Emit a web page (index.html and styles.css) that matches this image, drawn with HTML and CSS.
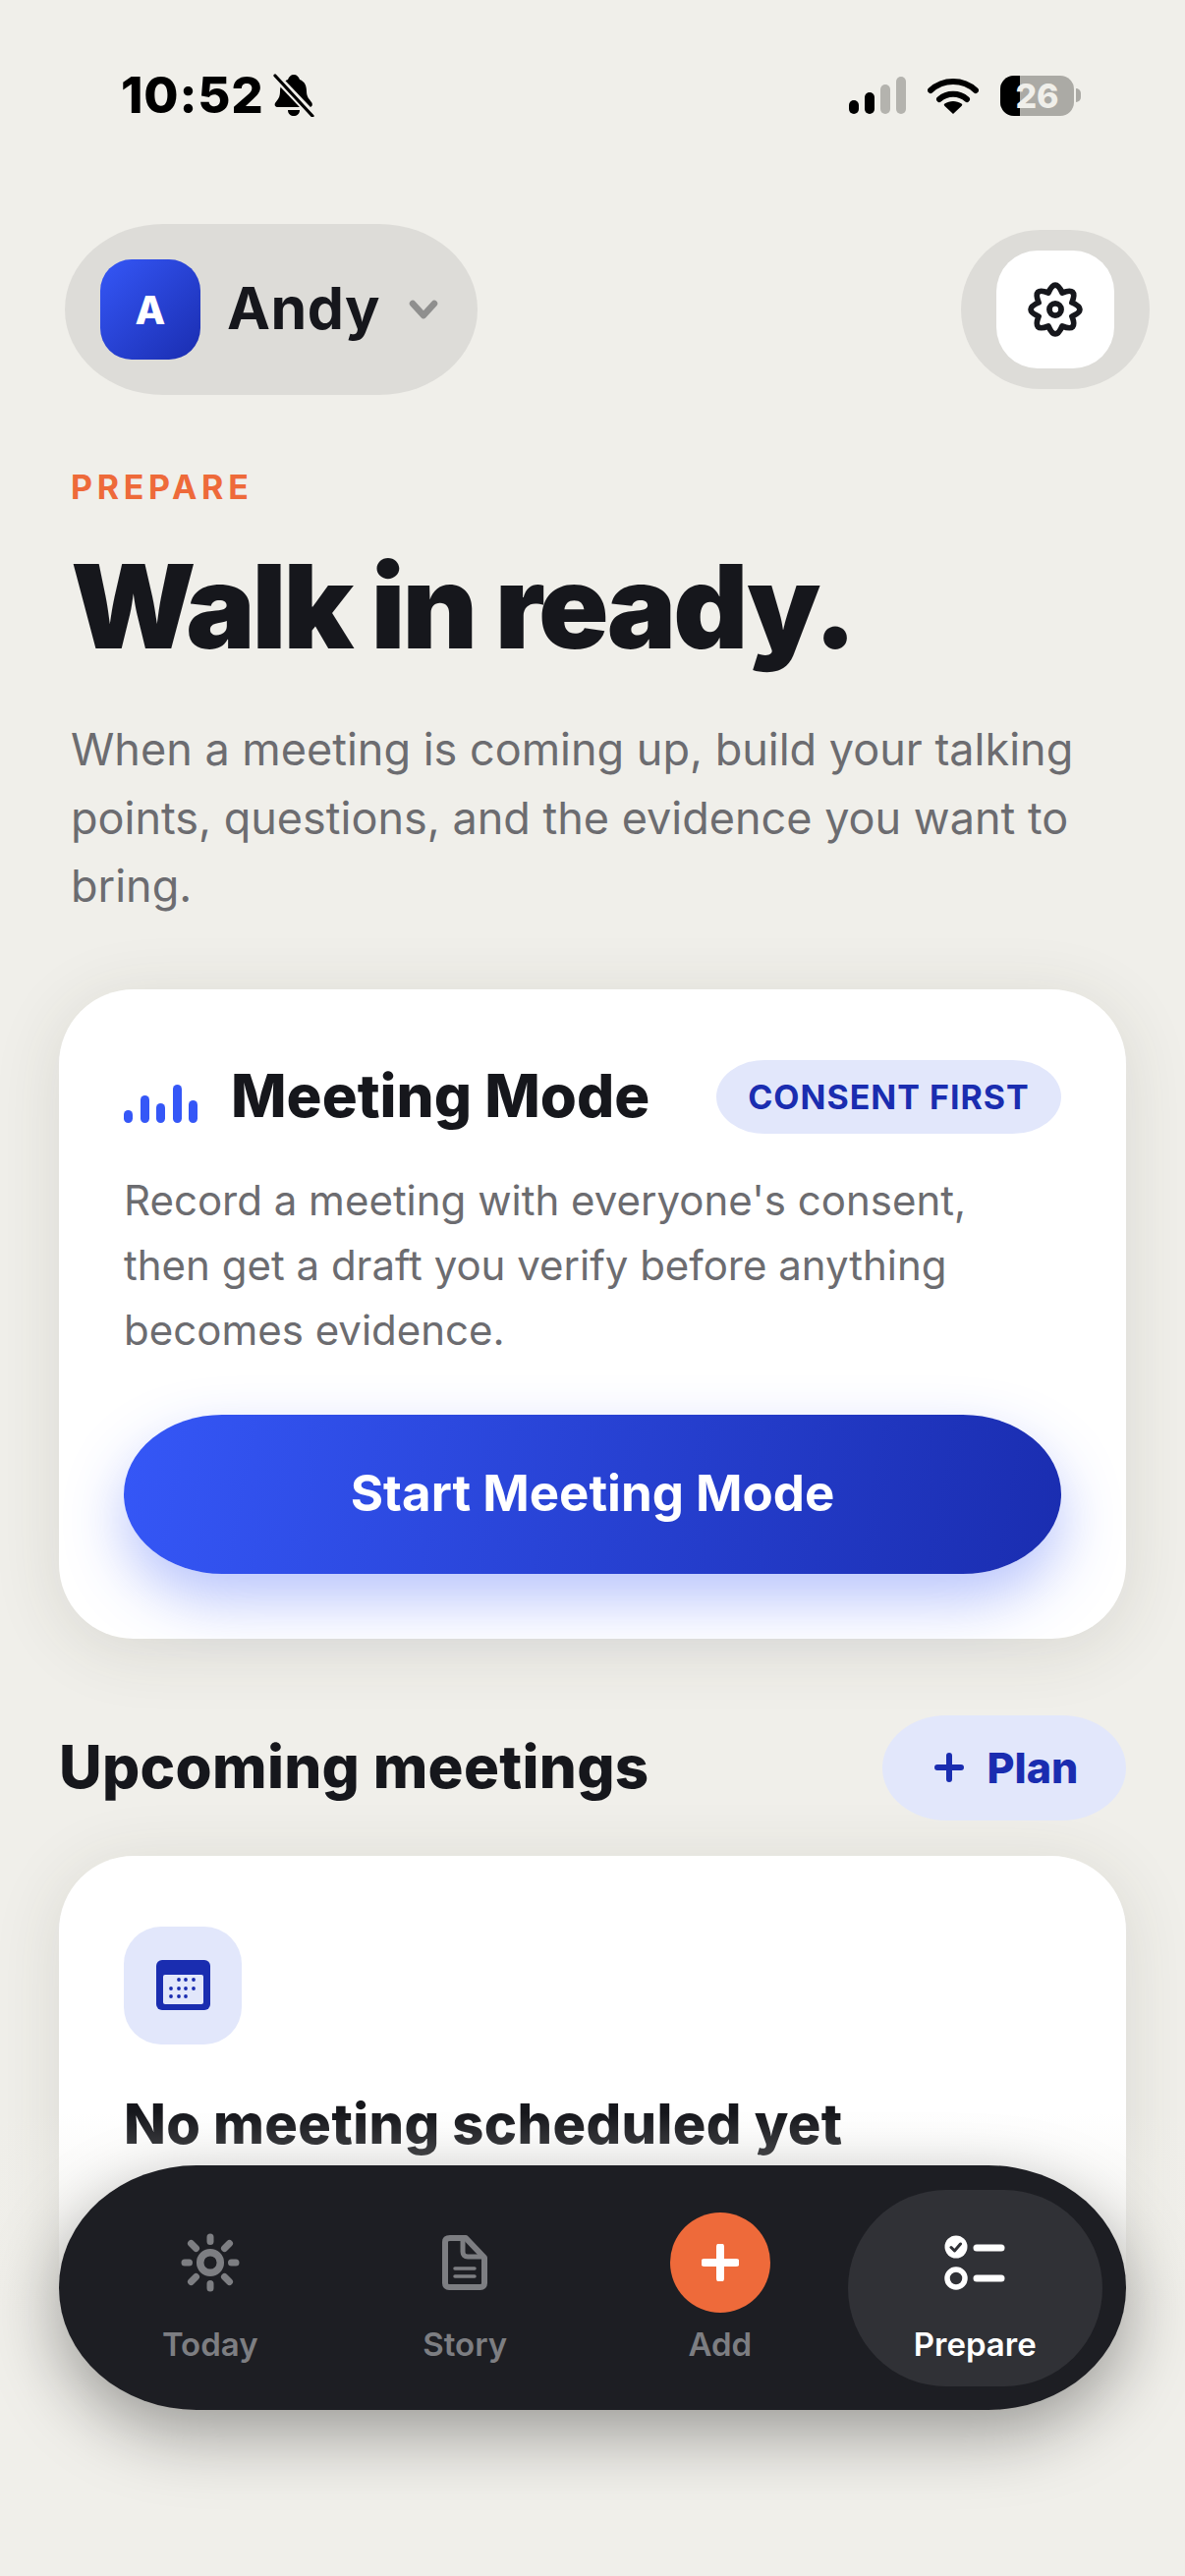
FILE: index.html
```html
<!DOCTYPE html>
<html lang="en">
<head>
    <meta charset="utf-8">
    <title>Prepare</title>
    <link rel="stylesheet" href="styles.css">
</head>
<body>
    <div class="phone">
        <!-- Status bar -->
        <div class="status-bar">
            <div class="status-left">
                <span class="clock">10:52</span>
                <svg class="bell" width="42" height="44" viewBox="0 0 42 44">
                    <path d="M21 1c3 0 5 2 6 5 5 2 7 6 7 12 0 6 3 8 5 11 2 3 0 5-2 5H5c-3 0-4-2-3-4 3-4 5-6 5-12 0-6 3-10 8-12 1-3 3-5 6-5zM15 37h12c0 4-3 6-6 6s-6-2-6-6z" fill="#000"/>
                    <path d="M1 1l40 42" stroke="#f0efea" stroke-width="8"/>
                    <path d="M2 2l38 41" stroke="#000" stroke-width="3.2" stroke-linecap="round"/>
                </svg>
            </div>
            <div class="status-right">
                <svg width="58" height="38" viewBox="0 0 58 38">
                    <rect x="0" y="24" width="10" height="14" rx="5" fill="#000"/>
                    <rect x="16" y="16" width="10" height="22" rx="5" fill="#000"/>
                    <rect x="32" y="8" width="10" height="30" rx="5" fill="#b4b3ae"/>
                    <rect x="48" y="0" width="10" height="38" rx="5" fill="#b4b3ae"/>
                </svg>
                <svg class="wifi" width="52" height="38" viewBox="0 0 52 38">
                    <path d="M3 14C16 2 36 2 49 14M12 23c8-7 20-7 28 0" fill="none" stroke="#000" stroke-width="6" stroke-linecap="round"/>
                    <path d="M26 38l-8.500-8c-1-1-1-2 0-2.500 5-3.500 12-3.500 17 0 1 .5 1 1.500 0 2.500z" fill="#000"/>
                </svg>
                <div class="battery">
                    <div class="battery-body">
                        <div class="battery-fill"></div>
                        <span class="battery-num">26</span>
                    </div>
                    <div class="battery-nub"></div>
                </div>
            </div>
        </div>

        <!-- Account row -->
        <div class="top-row">
            <div class="account">
                <div class="avatar">A</div>
                <span class="account-name">Andy</span>
                <svg class="chevron" width="30" height="20" viewBox="0 0 30 20">
                    <path d="M4 4l11 12L26 4" fill="none" stroke="#8f8f8e" stroke-width="6.500" stroke-linecap="round" stroke-linejoin="round"/>
                </svg>
            </div>
            <div class="settings-ring">
                <div class="settings-btn">
                    <svg width="58" height="58" viewBox="0 0 24 24" fill="none" stroke="#16171c" stroke-width="2.400" stroke-linejoin="round">
                        <circle cx="12" cy="12" r="2.500"/>
                        <path d="M9.090 4.980Q12 -1.600 14.910 4.980Q21.620 2.380 19.020 9.090Q25.600 12 19.020 14.910Q21.620 21.620 14.910 19.020Q12 25.600 9.090 19.020Q2.380 21.620 4.980 14.910Q-1.600 12 4.980 9.090Q2.380 2.380 9.090 4.980Z"/>
                    </svg>
                </div>
            </div>
        </div>

        <!-- Intro -->
        <div class="intro">
            <div class="eyebrow">PREPARE</div>
            <h1>Walk in ready.</h1>
            <p>When a meeting is coming up, build your talking points, questions, and the evidence you want to bring.</p>
        </div>

        <!-- Meeting mode card -->
        <div class="card meeting-card">
            <div class="meeting-head">
                <div class="bars">
                    <span class="bar bar-1"></span>
                    <span class="bar bar-2"></span>
                    <span class="bar bar-3"></span>
                    <span class="bar bar-4"></span>
                    <span class="bar bar-5"></span>
                </div>
                <h2>Meeting Mode</h2>
                <span class="badge">CONSENT FIRST</span>
            </div>
            <p class="meeting-text">Record a meeting with everyone's consent, then get a draft you verify before anything becomes evidence.</p>
            <div class="start-btn">Start Meeting Mode</div>
        </div>

        <!-- Upcoming -->
        <div class="section-head">
            <h3>Upcoming meetings</h3>
            <div class="plan-btn">
                <svg width="30" height="30" viewBox="0 0 30 30">
                    <path d="M15 3v24M3 15h24" stroke="#1a2db0" stroke-width="6" stroke-linecap="round"/>
                </svg>
                <span>Plan</span>
            </div>
        </div>

        <div class="card empty-card">
            <div class="tile">
                <svg width="55" height="51" viewBox="0 0 55 51">
                    <rect width="55" height="51" rx="6" fill="#1a2db0"/>
                    <rect x="7" y="15" width="41" height="30" rx="2" fill="#e2e7fb"/>
                    <g fill="#1a2db0">
                        <circle cx="23" cy="20" r="1.900"/><circle cx="30" cy="20" r="1.900"/><circle cx="38" cy="20" r="1.900"/>
                        <circle cx="15" cy="29" r="1.900"/><circle cx="23" cy="29" r="1.900"/><circle cx="30" cy="29" r="1.900"/><circle cx="38" cy="29" r="1.900"/>
                        <circle cx="15" cy="37" r="1.900"/><circle cx="23" cy="37" r="1.900"/><circle cx="30" cy="37" r="1.900"/>
                    </g>
                </svg>
            </div>
            <h4>No meeting scheduled yet</h4>
        </div>

        <div class="fade"></div>

        <!-- Tab bar -->
        <nav class="tabbar">
            <div class="tab">
                <div class="tab-icon">
                    <svg width="62" height="62" viewBox="0 0 62 62" fill="none" stroke="#7d7e82" stroke-linecap="round">
                        <circle cx="31" cy="31" r="10.300" stroke-width="7.500"/>
                        <path d="M31 5v4.500M31 52.500v4.500M5 31h4.500M52.500 31h4.500M11.500 11.500l5 5M45.500 45.500l5 5M50.500 11.500l-5 5M16.500 45.500l-5 5" stroke-width="7"/>
                    </svg>
                </div>
                <span>Today</span>
            </div>
            <div class="tab">
                <div class="tab-icon">
                    <svg width="46" height="56" viewBox="0 0 46 56" fill="none" stroke="#7d7e82" stroke-linejoin="round">
                        <path d="M8 3h16l19 20v26c0 2.500-1.500 4-4 4H7c-2.500 0-4-1.500-4-4V7c0-2.500 1.500-4 5-4z" stroke-width="6"/>
                        <path d="M21 3v14c0 3 2 5 5 5h17" fill="none" stroke-width="5"/>
                        <path d="M13 34h20M13 42h20" stroke-width="3.500" stroke-linecap="round"/>
                    </svg>
                </div>
                <span>Story</span>
            </div>
            <div class="tab">
                <div class="tab-icon">
                    <div class="add-circle">
                        <svg width="38" height="38" viewBox="0 0 38 38">
                            <path d="M19 3v32M3 19h32" stroke="#fff" stroke-width="8" stroke-linecap="round"/>
                        </svg>
                    </div>
                </div>
                <span>Add</span>
            </div>
            <div class="tab tab-active">
                <div class="tab-icon">
                    <svg width="62" height="56" viewBox="0 0 62 56" fill="none">
                        <circle cx="12" cy="12" r="11.500" fill="#fff"/>
                        <path d="M7 12.500l3.500 3.500 6-7" stroke="#303136" stroke-width="3" stroke-linecap="round" stroke-linejoin="round"/>
                        <circle cx="12" cy="44" r="9" stroke="#fff" stroke-width="5.500"/>
                        <path d="M33 13h25M33 44h25" stroke="#fff" stroke-width="7" stroke-linecap="round"/>
                    </svg>
                </div>
                <span>Prepare</span>
            </div>
        </nav>
    </div>
</body>
</html>
```

FILE: styles.css
```css
/* Page */
body {
    margin: 0;
    background-color: #f0efea;
    font-family: "Inter", "Liberation Sans", sans-serif;
    color: #16171c;
}

.phone {
    position: relative;
    height: 2622px;
    overflow: hidden;
    padding: 0 60px;
    box-sizing: border-box;
}

h1, h2, h3, h4, p {
    margin: 0;
}

/* Status bar */
.status-bar {
    display: flex;
    justify-content: space-between;
    align-items: center;
    height: 44px;
    padding: 75px 46px 0 63px;
    box-sizing: content-box;
}

.status-left {
    display: flex;
    align-items: center;
    gap: 9px;
}

.clock {
    font-size: 51px;
    font-weight: 800;
    letter-spacing: 0.8px;
    line-height: 44px;
    color: #000;
}

.status-right {
    display: flex;
    align-items: center;
    gap: 22px;
}

.battery {
    display: flex;
    align-items: center;
    gap: 2px;
}

.battery-body {
    position: relative;
    width: 75px;
    height: 41px;
    border-radius: 14px;
    background-color: #abaaa5;
    overflow: hidden;
    display: flex;
    justify-content: center;
    align-items: center;
}

.battery-fill {
    position: absolute;
    left: 0;
    top: 0;
    bottom: 0;
    width: 20px;
    background-color: #000;
}

.battery-num {
    position: relative;
    font-size: 34px;
    font-weight: 800;
    color: #f0efea;
}

.battery-nub {
    width: 5px;
    height: 14px;
    border-radius: 0 7px 7px 0;
    background-color: #abaaa5;
}

/* Account row */
.top-row {
    display: flex;
    justify-content: space-between;
    align-items: center;
    margin: 109px -24px 0 6px;
}

.account {
    display: flex;
    align-items: center;
    width: 420px;
    height: 174px;
    box-sizing: border-box;
    padding-left: 36px;
    border-radius: 100px / 87px;
    background-color: #dddcd8;
}

.avatar {
    display: flex;
    justify-content: center;
    align-items: center;
    width: 102px;
    height: 102px;
    border-radius: 32px;
    background: linear-gradient(135deg, #3557f7, #1a2db0);
    color: #fff;
    font-size: 40px;
    font-weight: 800;
}

.account-name {
    margin-left: 27px;
    margin-bottom: 3px;
    font-size: 59px;
    font-weight: 700;
    letter-spacing: 0.5px;
}

.chevron {
    margin-left: 29px;
}

.settings-ring {
    display: flex;
    justify-content: center;
    align-items: center;
    width: 192px;
    height: 162px;
    border-radius: 81px;
    background-color: #dddcd8;
}

.settings-btn {
    display: flex;
    justify-content: center;
    align-items: center;
    width: 120px;
    height: 120px;
    border-radius: 42px;
    background-color: #fff;
}

/* Intro */
.intro {
    padding: 0 0 0 12px;
}

.eyebrow {
    margin-top: 74px;
    font-size: 34px;
    line-height: 40px;
    font-weight: 700;
    letter-spacing: 4.700px;
    color: #ee6a3a;
}

h1 {
    margin-top: 33px;
    font-size: 118px;
    line-height: 136px;
    font-weight: 900;
    letter-spacing: -3px;
    white-space: nowrap;
}

.intro p {
    margin-top: 43px;
    font-size: 45px;
    line-height: 69.500px;
    color: #6c6c70;
}

/* Cards */
.card {
    background-color: #fff;
    border-radius: 76px;
    box-sizing: border-box;
    padding: 0 66px;
    box-shadow: 0 10px 70px rgba(60, 60, 40, 0.12);
}

.meeting-card {
    height: 661px;
    margin-top: 70px;
    padding-top: 72px;
}

.meeting-head {
    display: flex;
    align-items: center;
    height: 75px;
}

.bars {
    display: flex;
    align-items: flex-end;
    gap: 7.500px;
    height: 39px;
    margin-top: 14px;
    margin-right: 34px;
}

.bar {
    width: 9px;
    border-radius: 5px;
    background-color: #3557f7;
}

.bar-1 { height: 13px; }
.bar-2 { height: 28px; }
.bar-3 { height: 20px; }
.bar-4 { height: 39px; }
.bar-5 { height: 23px; }

h2 {
    margin-bottom: 3px;
    font-size: 60px;
    font-weight: 800;
    letter-spacing: 0;
    white-space: nowrap;
}

.badge {
    margin-left: auto;
    width: 351px;
    height: 75px;
    border-radius: 50px / 38px;
    background-color: #e2e7fb;
    color: #1a2db0;
    font-size: 34px;
    font-weight: 700;
    letter-spacing: 1px;
    line-height: 75px;
    text-align: center;
    white-space: nowrap;
}

.meeting-text {
    margin-top: 35px;
    font-size: 42px;
    line-height: 66px;
    color: #6c6c70;
}

.start-btn {
    margin-top: 53px;
    height: 162px;
    border-radius: 100px / 81px;
    background: linear-gradient(100deg, #3557f7, #1a2db0);
    box-shadow: 0 26px 60px rgba(53, 87, 247, 0.35);
    color: #fff;
    font-size: 51px;
    font-weight: 700;
    line-height: 160px;
    text-align: center;
}

/* Upcoming */
.section-head {
    display: flex;
    justify-content: space-between;
    align-items: center;
    margin-top: 78px;
}

h3 {
    margin-bottom: 3px;
    font-size: 60px;
    font-weight: 800;
    letter-spacing: 0.300px;
}

.plan-btn {
    display: flex;
    justify-content: center;
    align-items: center;
    gap: 24px;
    width: 248px;
    height: 107px;
    box-sizing: border-box;
    padding-left: 4px;
    border-radius: 66px / 54px;
    background-color: #e2e7fb;
    color: #1a2db0;
    font-size: 43px;
    font-weight: 800;
}

.empty-card {
    height: 560px;
    margin-top: 36px;
    padding-top: 72px;
}

.tile {
    display: flex;
    justify-content: center;
    align-items: center;
    width: 120px;
    height: 120px;
    border-radius: 38px;
    background-color: #e2e7fb;
}

h4 {
    margin-top: 48px;
    font-size: 56px;
    line-height: 66px;
    font-weight: 800;
    letter-spacing: 0.400px;
    white-space: nowrap;
}

/* Fades the list out behind the tab bar */
.fade {
    position: absolute;
    left: 0;
    right: 0;
    top: 2150px;
    bottom: 0;
    background: linear-gradient(rgba(240, 239, 234, 0), #f0efea 45%);
}

/* Tab bar */
.tabbar {
    position: absolute;
    left: 60px;
    top: 2204px;
    width: 1086px;
    height: 249px;
    box-sizing: border-box;
    padding: 25px 24px 24px;
    display: grid;
    grid-template-columns: repeat(4, 1fr);
    border-radius: 140px / 124px;
    background-color: #1d1e23;
    box-shadow: 0 24px 70px rgba(0, 0, 0, 0.36);
}

.tab {
    display: flex;
    flex-direction: column;
    align-items: center;
    border-radius: 100px;
    color: #7d7e82;
    font-size: 33px;
    font-weight: 600;
}

.tab-icon {
    display: flex;
    justify-content: center;
    align-items: center;
    height: 102px;
    margin-top: 23px;
    margin-bottom: 12px;
}

.tab-active {
    background-color: #303136;
    color: #fff;
}

.add-circle {
    display: flex;
    justify-content: center;
    align-items: center;
    width: 102px;
    height: 102px;
    border-radius: 50%;
    background-color: #ee6a3a;
}
```
